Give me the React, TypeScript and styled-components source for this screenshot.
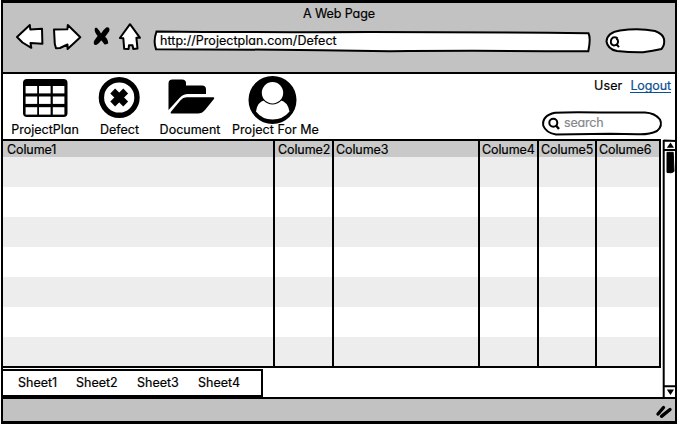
import React from "react";
import styled, { createGlobalStyle } from "styled-components";

const GlobalStyle = createGlobalStyle`
  * { box-sizing: border-box; }
  body {
    margin: 0;
    background: #fff;
    color: #000;
    font: 12.5px/16px Inter, Lato, sans-serif;
    font-feature-settings: "cv11" 1;
    overflow: hidden;
  }
`;

const Window = styled.div`
  width: 676px;
  height: 424px;
  margin-left: 1px;
  display: flex;
  flex-direction: column;
  border: solid #000;
  border-width: 0 2px;
`;

const Text = styled.span<{ $track?: number }>`
  display: block;
  white-space: nowrap;
  letter-spacing: ${(p) => p.$track ?? 0}px;
  -webkit-text-stroke: 0.2px currentColor;
`;

const Chrome = styled.header`
  height: 74px;
  flex: none;
  background: #c2c2c2;
  border-top: 3px solid #000;
  border-bottom: 2px solid #000;
`;

const TitleRow = styled.div`
  display: flex;
  justify-content: center;
  height: 19px;
  padding-top: 3px;
`;

const NavRow = styled.div`
  display: flex;
  height: 44px;
  padding-left: 12px;
`;

const NavIcons = styled.svg`
  display: block;
  width: 130px;
  height: 34px;
  flex: none;
`;

const Field = styled.div<{ $width: number; $height: number; $top: number; $left: number; $pad: string }>`
  position: relative;
  flex: none;
  width: ${(p) => p.$width}px;
  height: ${(p) => p.$height}px;
  margin: ${(p) => p.$top}px 0 0 ${(p) => p.$left}px;
  padding: ${(p) => p.$pad};
`;

const FieldOutline = styled.svg`
  position: absolute;
  inset: 0;
  width: 100%;
  height: 100%;
  overflow: visible;
`;

const FieldText = styled(Text)<{ $muted?: boolean }>`
  position: relative;
  color: ${(p) => (p.$muted ? "#85878a" : "#000")};
`;

const Toolbar = styled.div`
  height: 65px;
  flex: none;
  display: flex;
  justify-content: space-between;
`;

const Modules = styled.nav`
  display: flex;
`;

const Module = styled.div<{ $width: number }>`
  width: ${(p) => p.$width}px;
  flex: none;
  display: flex;
  flex-direction: column;
  align-items: center;
`;

const ModuleIcon = styled.svg`
  display: block;
  flex: none;
  width: 50px;
  height: 48px;
  overflow: visible;
`;

const Account = styled.div`
  width: 134px;
  display: flex;
  flex-direction: column;
  padding-top: 4px;
`;

const AccountLinks = styled.div`
  display: flex;
  justify-content: flex-end;
  gap: 8px;
  padding-right: 4px;
`;

const Logout = styled(Text)`
  color: #0b4f93;
  height: 15px;
  border-bottom: 1px solid #0b4f93;
`;

const Main = styled.main`
  display: flex;
  height: 258px;
  flex: none;
`;

const Content = styled.div`
  width: 659px;
  flex: none;
`;

const Table = styled.div`
  height: 229px;
  width: 658px;
  display: flex;
  border: solid #000;
  border-width: 2px 2px 2px 0;
`;

const Column = styled.div<{ $width: number; $last?: boolean }>`
  width: ${(p) => p.$width}px;
  flex: none;
  border-right: ${(p) => (p.$last ? "none" : "2px solid #000")};
  background: repeating-linear-gradient(#ededed 0 30px, #fff 30px 60px) 0 16px;
`;

const ColumnHead = styled.div<{ $inset: number }>`
  height: 16px;
  background: #c9c9c9;
  padding: 1px 0 0 ${(p) => p.$inset}px;
`;

const Sheets = styled.div`
  display: flex;
  width: 262px;
  height: 28px;
  margin: 1px 0 0 -2px;
  border: 2px solid #000;
  padding: 4px 0 0 15px;
`;

const Sheet = styled.div<{ $width: number }>`
  width: ${(p) => p.$width}px;
  flex: none;
`;

const Scrollbar = styled.svg`
  display: block;
  width: 15px;
  height: 258px;
  flex: none;
  overflow: visible;
`;

const StatusBar = styled.footer`
  height: 27px;
  flex: none;
  display: flex;
  justify-content: flex-end;
  background: #c2c2c2;
  border: solid #000;
  border-width: 2px 0 3px;
`;

const Grip = styled.svg`
  display: block;
  width: 20px;
  height: 20px;
  overflow: visible;
`;

const columns = [
  { name: "Colume1", width: 272, inset: 4 },
  { name: "Colume2", width: 59, inset: 3 },
  { name: "Colume3", width: 146, inset: 2 },
  { name: "Colume4", width: 59, inset: 2 },
  { name: "Colume5", width: 58, inset: 2 },
  { name: "Colume6", width: 62, inset: 2 },
];

const sheets = [
  { name: "Sheet1", width: 58 },
  { name: "Sheet2", width: 61 },
  { name: "Sheet3", width: 61 },
  { name: "Sheet4", width: 61 },
];

function TableIcon() {
  return (
    <ModuleIcon viewBox="0 0 50 48">
      <rect x="3" y="5" width="44.5" height="38" rx="4" />
      {[12, 22.5, 33.2].map((y) =>
        [5.6, 19, 32.8].map((x) => <rect key={`${x}-${y}`} x={x} y={y} width="11.6" height="7.4" fill="#fff" />)
      )}
    </ModuleIcon>
  );
}

function DefectIcon() {
  return (
    <ModuleIcon viewBox="0 0 50 48">
      <circle cx="24.2" cy="23.5" r="17.8" fill="none" stroke="#000" strokeWidth="5.4" />
      <path d="M17.7 17 30.7 30M30.7 17 17.7 30" stroke="#000" strokeWidth="6.8" />
    </ModuleIcon>
  );
}

function FolderIcon() {
  return (
    <ModuleIcon viewBox="0 0 50 48">
      <path d="M3.5 36V9.5Q3.5 5.5 7.5 5.5H17Q21 5.5 21 9V11.5H37Q41 11.5 41 15.5V20H23Q18 20 14.5 24Z" />
      <path d="M21.5 23.2H48.2Q50 23.4 48.7 25.2L40 36Q37 39.6 33 39.6H7Q4.6 39.5 6.2 37.4L15.5 26.3Q18 23.2 21.5 23.2Z" />
    </ModuleIcon>
  );
}

function PersonIcon() {
  return (
    <ModuleIcon viewBox="0 0 50 48">
      <circle cx="21.5" cy="26" r="24" />
      <path d="M5 37.5Q6 28 14 26Q21.5 32.5 29 26Q37 28 38.5 37.5Q32 45.5 21.5 45.5Q11 45.5 5 37.5Z" fill="#fff" />
      <circle cx="21.5" cy="18.7" r="11.9" fill="#000" />
      <circle cx="21.5" cy="18.7" r="10.7" fill="#fff" />
    </ModuleIcon>
  );
}

export default function App() {
  return (
    <>
      <GlobalStyle />
      <Window>
        <Chrome>
          <TitleRow>
            <Text $track={-0.1}>A Web Page</Text>
          </TitleRow>
          <NavRow>
            <NavIcons viewBox="15 22 130 34" fill="#fff" stroke="#000" strokeWidth="2" strokeLinejoin="round">
              <path d="M17 37 29.8 25 30.3 29.5 42 28.7 42.4 43.8 30.5 43 31.3 47.8 22.5 42.5Z" />
              <path d="M54 29.5 67.4 29.2 67.8 25 80.3 37.3 67.6 49 67.5 44.5 60 48 56 48.3 54.8 44Z" />
              <path d="M96.5 28.5Q99 31 101 35Q104 30 107 28Q109.5 28 108.4 31L104 37Q107 39 107.4 43L105 43.8Q103 41 101 39Q98 44 95 44.2Q93.7 42 96 39.5L98.6 36Q94.8 32 95.6 28.5Z" fill="#000" strokeWidth="1.6" />
              <path d="M130 24.2 140 37.8 136.4 37.8 137.5 48.6 133.3 49 132.5 45.3 129 45.2 128.6 49 124.2 48.8 123.3 38.2 119.9 38Z" />
            </NavIcons>
            <Field $width={437} $height={22} $top={8} $left={9} $pad="3px 0 0 6px">
              <FieldOutline viewBox="154 30 437 22">
                <path d="M156.5 31.5Q250 32.5 370 32 480 32 588.5 33.2Q591 38 588.3 51.3Q470 50.5 390 51.2 270 49.3 156 49.2 153 41 156.5 31.5Z" fill="#fff" stroke="#000" strokeWidth="2" />
              </FieldOutline>
              <FieldText $track={0.04}>http://Projectplan.com/Defect</FieldText>
            </Field>
            <Field $width={60} $height={25} $top={6} $left={14} $pad="0">
              <FieldOutline viewBox="605 28 60 25" fill="#fff" stroke="#000" strokeWidth="2">
                <path d="M620 30.5Q639 28 655 31 663 34 664 39 665 45 661.5 49 653 51 643 52.3 630 52.5 617 51 607.5 49 606.5 41.5 607 32.5 620 30.5Z" />
                <path d="M617.7 38.3Q613.5 36 611.4 39.2 609.5 44 613.5 45.4 618.4 45.3 618 41Q618 39.4 616.3 38.6M616.3 44 619 47.2" fill="none" />
              </FieldOutline>
            </Field>
          </NavRow>
        </Chrome>
        <Toolbar>
          <Modules>
            <Module $width={84}><TableIcon /><Text>ProjectPlan</Text></Module>
            <Module $width={65}><DefectIcon /><Text>Defect</Text></Module>
            <Module $width={76}><FolderIcon /><Text>Document</Text></Module>
            <Module $width={95}><PersonIcon /><Text $track={0.05}>Project For Me</Text></Module>
          </Modules>
          <Account>
            <AccountLinks>
              <Text $track={0.1}>User</Text>
              <Logout $track={-0.1}>Logout</Logout>
            </AccountLinks>
            <Field $width={120} $height={24} $top={17} $left={1} $pad="4px 0 0 22px">
              <FieldOutline viewBox="542 111 120 24" fill="#fff" stroke="#000" strokeWidth="2">
                <path d="M555 112.8Q567 111.8 600 112.4L645 112.5Q655 113 660 119.5 663 126 657 131 649 134.7 638 134.2L610 133.8 556 134.5Q546 133 543.2 125.5 542 115.5 555 112.8Z" />
                <circle cx="553.3" cy="122.7" r="4" fill="none" />
                <path d="M556.2 125.8 559 129" strokeWidth="2.4" />
              </FieldOutline>
              <FieldText $muted $track={-0.2}>search</FieldText>
            </Field>
          </Account>
        </Toolbar>
        <Main>
          <Content>
            <Table>
              {columns.map((c, i) => (
                <Column key={c.name} $width={c.width} $last={i === columns.length - 1}>
                  <ColumnHead $inset={c.inset}><Text $track={-0.1}>{c.name}</Text></ColumnHead>
                </Column>
              ))}
            </Table>
            <Sheets>
              {sheets.map((s) => (
                <Sheet key={s.name} $width={s.width}><Text>{s.name}</Text></Sheet>
              ))}
            </Sheets>
          </Content>
          <Scrollbar viewBox="662 139 15 258">
            <path d="M663.5 140.5 676 141M663.7 140V397M663.5 150H676M663.5 386.3H676" fill="none" stroke="#000" strokeWidth="2" />
            <path d="M670.5 142.5 674 147.8H666.8Z M666.8 389.5H674L670.5 395Z" />
            <path d="M667 152.3H673.2L674 171.5Q672 173.5 667 172.5Z" stroke="#000" strokeLinejoin="round" />
          </Scrollbar>
        </Main>
        <StatusBar>
          <Grip viewBox="655 399 20 20" stroke="#000" strokeWidth="3.4" strokeLinecap="round">
            <path d="M658 414 663.5 407.5M661.5 416.3 670 409.5" />
          </Grip>
        </StatusBar>
      </Window>
    </>
  );
}
